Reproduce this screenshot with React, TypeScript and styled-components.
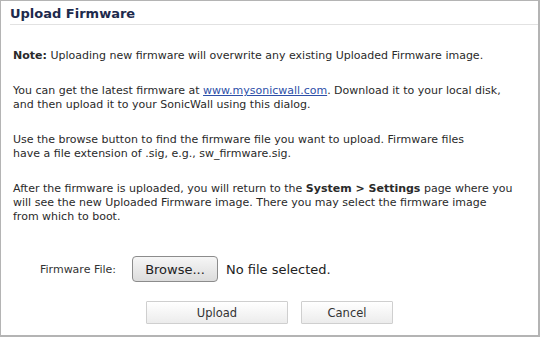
import React from "react";
import styled, { createGlobalStyle } from "styled-components";

const Global = createGlobalStyle`
  html, body { margin: 0; padding: 0; background: #fff; }
  body { width: 540px; height: 337px; overflow: hidden; }
`;

const Panel = styled.div`
  box-sizing: border-box;
  width: 540px;
  height: 337px;
  border: 1px solid #b4b4b4;
  border-bottom-width: 2px;
  border-right-width: 2px;
  background: #fff;
  font-family: "DejaVu Sans", Verdana, sans-serif;
  color: #2a2a2a;
  display: flex;
  flex-direction: column;
`;

const Header = styled.div`
  margin: 0 0 0 9px;
  padding: 5px 0 3px 0;
  border-bottom: 1px solid #e2e2e2;
`;

const Title = styled.h1`
  margin: 0;
  font-size: 13px;
  font-weight: bold;
  color: #1d2a4c;
  line-height: 15px;
`;

const Body = styled.div`
  padding: 24px 0 0 12px;
  display: flex;
  flex-direction: column;
  gap: 21px;
`;

const Para = styled.p`
  margin: 0;
  font-size: 11px;
  line-height: 14px;
  letter-spacing: 0;
`;

const Link = styled.a`
  color: #2d4fa8;
  text-decoration: underline;
`;

const FileRow = styled.div`
  display: flex;
  align-items: center;
  margin: 32px 0 0 39px;
`;

const Label = styled.span`
  font-size: 11px;
  color: #333;
  width: 92px;
`;

const BrowseButton = styled.button`
  box-sizing: border-box;
  height: 26px;
  width: 86px;
  border: 1px solid #8c8c8c;
  border-radius: 4px;
  background: linear-gradient(#f6f6f6, #dcdcdc);
  font-family: "DejaVu Sans", Verdana, sans-serif;
  font-size: 13px;
  color: #222;
  padding: 0;
`;

const FileStatus = styled.span`
  margin-left: 8px;
  font-size: 13px;
  color: #222;
`;

const Actions = styled.div`
  display: flex;
  gap: 13px;
  margin: 19px 0 0 145px;
`;

const ActionButton = styled.button<{ $w: number }>`
  box-sizing: border-box;
  width: ${(p) => p.$w}px;
  height: 23px;
  border: 1px solid #cfcfcf;
  border-radius: 1px;
  background: linear-gradient(#ffffff, #ececec);
  font-family: "DejaVu Sans", Verdana, sans-serif;
  font-size: 11.5px;
  color: #333;
  padding: 0;
`;

export default function App() {
  return (
    <>
      <Global />
      <Panel>
        <Header>
          <Title>Upload Firmware</Title>
        </Header>
        <Body>
          <Para>
            <b>Note:</b> Uploading new firmware will overwrite any existing Uploaded Firmware image.
          </Para>
          <Para>
            You can get the latest firmware at <Link href="#">www.mysonicwall.com</Link>. Download it to your local disk,
            <br />
            and then upload it to your SonicWall using this dialog.
          </Para>
          <Para>
            Use the browse button to find the firmware file you want to upload. Firmware files
            <br />
            have a file extension of .sig, e.g., sw_firmware.sig.
          </Para>
          <Para>
            After the firmware is uploaded, you will return to the <b>System &gt; Settings</b> page where you
            <br />
            will see the new Uploaded Firmware image. There you may select the firmware image
            <br />
            from which to boot.
          </Para>
        </Body>
        <FileRow>
          <Label>Firmware File:</Label>
          <BrowseButton>Browse...</BrowseButton>
          <FileStatus>No file selected.</FileStatus>
        </FileRow>
        <Actions>
          <ActionButton $w={142}>Upload</ActionButton>
          <ActionButton $w={92}>Cancel</ActionButton>
        </Actions>
      </Panel>
    </>
  );
}
